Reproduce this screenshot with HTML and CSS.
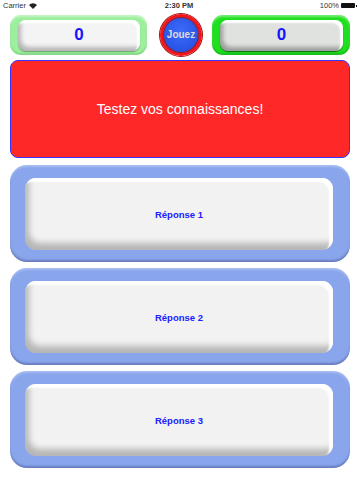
FILE: index.html
```html
<!DOCTYPE html>
<html>
<head>
  <title>Quiz</title>
  <link rel="stylesheet" href="styles.css">
</head>
<body>
  <div class="statusbar">
    <div class="carrier">Carrier
      <svg class="wifi" width="8" height="6" viewBox="0 0 8 6">
        <path d="M0 2 A5.5 5.5 0 0 1 8 2 L4 6 Z" fill="#222"/>
      </svg>
    </div>
    <div class="clock">2:30 PM</div>
    <div class="battery">100% <span class="cell"></span></div>
  </div>

  <div class="scores">
    <div class="score light">
      <div class="score-inner">0</div>
    </div>
    <button class="play">Jouez</button>
    <div class="score bright">
      <div class="score-inner">0</div>
    </div>
  </div>

  <div class="question">Testez vos connaissances!</div>

  <div class="answers">
    <div class="answer"><div class="answer-inner">Réponse 1</div></div>
    <div class="answer"><div class="answer-inner">Réponse 2</div></div>
    <div class="answer"><div class="answer-inner">Réponse 3</div></div>
  </div>
</body>
</html>
```

FILE: styles.css
```css
body {
  margin: 0;
  font-family: "Liberation Sans", Arial, sans-serif;
  background: #fff;
}

.statusbar {
  height: 11px;
  display: flex;
  align-items: center;
  justify-content: space-between;
  padding: 0 5px 0 3px;
  font-size: 7.5px;
  color: #333;
}
.carrier {
  display: flex;
  align-items: center;
  gap: 3px;
  width: 60px;
}
.clock {
  font-weight: bold;
}
.battery {
  width: 60px;
  display: flex;
  align-items: center;
  justify-content: flex-end;
  gap: 2px;
}
.cell {
  display: inline-block;
  width: 14px;
  height: 5px;
  background: #111;
  border-radius: 1px;
  position: relative;
}
.cell::after {
  content: "";
  position: absolute;
  right: -2px;
  top: 1.5px;
  width: 1px;
  height: 2px;
  background: #111;
}

.scores {
  display: flex;
  align-items: center;
  padding: 0 10px;
  margin-top: 3px;
  height: 41px;
}
.score {
  width: 137px;
  height: 40px;
  border-radius: 11px;
  box-sizing: border-box;
  padding: 5px 7px 4px 8px;
}
.score.light {
  background: #9cef9c;
  box-shadow: inset 0 -2px 2px rgba(0,90,0,0.15), inset 0 2px 2px rgba(255,255,255,0.4);
}
.score.bright {
  width: 138px;
  margin-left: 10px;
  background: #1fe01f;
  box-shadow: inset 0 -2px 2px rgba(0,90,0,0.25), inset 0 2px 2px rgba(255,255,255,0.4);
}
.score-inner {
  height: 100%;
  border-radius: 8px;
  display: flex;
  align-items: center;
  justify-content: center;
  font-size: 17px;
  font-weight: bold;
  color: #1515ff;
}
.light .score-inner {
  background: #f4f4f4;
  box-shadow: inset -3px 3px 2px #fff, inset 3px -4px 4px rgba(0,0,0,0.25), 0 1px 1px rgba(0,0,0,0.3);
}
.bright .score-inner {
  background: #dfe2df;
  box-shadow: inset -3px 3px 2px #fff, inset 3px -4px 4px rgba(0,0,0,0.3), 0 1px 1px rgba(0,0,0,0.5);
}

.play {
  width: 42px;
  height: 42px;
  margin-left: 13px;
  border-radius: 50%;
  border: 3px solid #f4141a;
  box-shadow: 0 0 0 1px #a01010, inset 0 0 0 1px #902020;
  background: radial-gradient(circle at 50% 40%, #3d6cf6, #1f48e0);
  color: #dcdcdc;
  font-family: "Liberation Sans", Arial, sans-serif;
  font-size: 10px;
  font-weight: bold;
  padding: 0;
}

.question {
  margin: 5px 10px 0;
  height: 98px;
  box-sizing: border-box;
  border: 1px solid #3535ff;
  border-radius: 8px;
  background: #fe2828;
  color: #fff;
  font-size: 14px;
  display: flex;
  align-items: center;
  justify-content: center;
}

.answers {
  display: flex;
  flex-direction: column;
  gap: 6px;
  margin: 7px 10px 0;
}
.answer {
  height: 97px;
  box-sizing: border-box;
  border-radius: 17px;
  background: #89a5ec;
  padding: 13px 17px 12px 15px;
  box-shadow: inset 0 -2px 2px rgba(40,50,100,0.35), inset 0 2px 2px rgba(255,255,255,0.25);
}
.answer-inner {
  height: 100%;
  border-radius: 11px;
  background: #f2f2f2;
  box-shadow: inset -4px 4px 2px #fff, inset 4px -7px 6px rgba(0,0,0,0.25);
  display: flex;
  align-items: center;
  justify-content: center;
  font-size: 9.5px;
  font-weight: bold;
  color: #2020ff;
}
```
